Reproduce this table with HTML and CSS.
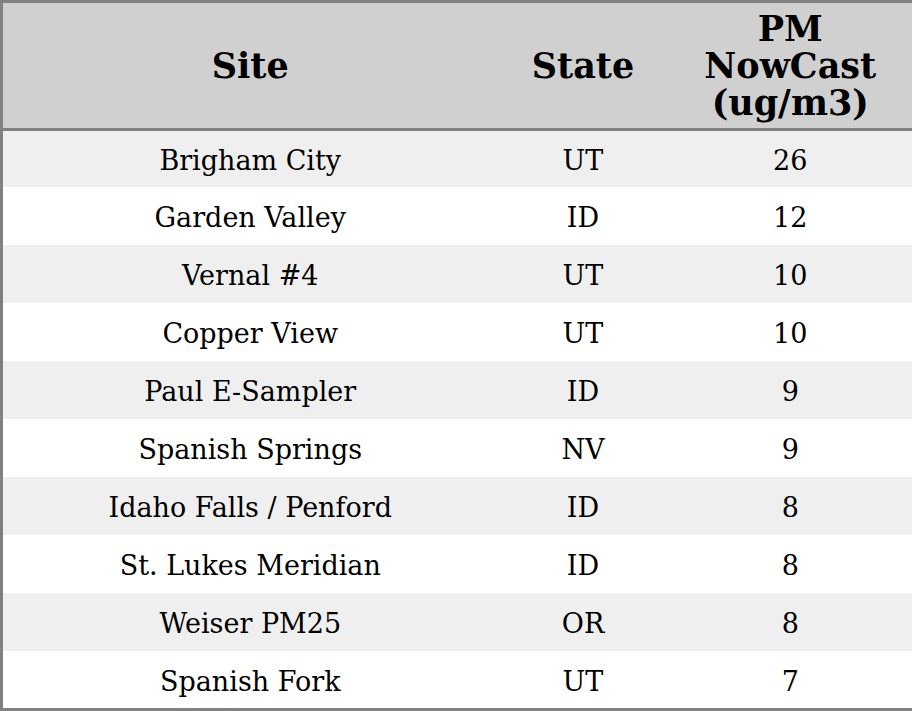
FILE: index.html
```html
<!DOCTYPE html>
<html>
<head>
<meta charset="utf-8">
<link rel="stylesheet" href="styles.css">
</head>
<body>
<table class="aq">
  <colgroup>
    <col class="c-site">
    <col class="c-state">
    <col class="c-pm">
  </colgroup>
  <thead>
    <tr class="head"><th>Site</th><th>State</th><th>PM<br>NowCast<br>(ug/m3)</th></tr>
  </thead>
  <tbody>
    <tr class="r1"><td>Brigham City</td><td>UT</td><td>26</td></tr>
    <tr><td>Garden Valley</td><td>ID</td><td>12</td></tr>
    <tr><td>Vernal #4</td><td>UT</td><td>10</td></tr>
    <tr><td>Copper View</td><td>UT</td><td>10</td></tr>
    <tr><td>Paul E-Sampler</td><td>ID</td><td>9</td></tr>
    <tr><td>Spanish Springs</td><td>NV</td><td>9</td></tr>
    <tr><td>Idaho Falls / Penford</td><td>ID</td><td>8</td></tr>
    <tr><td>St. Lukes Meridian</td><td>ID</td><td>8</td></tr>
    <tr><td>Weiser PM25</td><td>OR</td><td>8</td></tr>
    <tr class="rlast"><td>Spanish Fork</td><td>UT</td><td>7</td></tr>
  </tbody>
</table>
</body>
</html>
```
FILE: styles.css
```css
html, body {
  margin: 0;
  padding: 0;
  background: #ffffff;
}
.aq {
  width: 912px;
  border-collapse: collapse;
  border: 3px solid #808080;
  font-family: "DejaVu Serif", serif;
  color: #000;
  table-layout: fixed;
}
.c-site { width: 496px; }
.c-state { width: 171px; }
.c-pm { width: 245px; }
.aq th, .aq td {
  padding: 0;
  text-align: center;
  vertical-align: middle;
}
.head {
  background: #d0d0d0;
  height: 128px;
  border-bottom: 3px solid #808080;
}
.head th {
  font-size: 35px;
  font-weight: bold;
  line-height: 37px;
}
.aq tbody tr {
  height: 58px;
  font-size: 27px;
}
.aq tbody td {
  padding-top: 4px;
}
.aq tbody tr:nth-child(odd) {
  background: #efefef;
}
.aq tbody tr.r1 { height: 57px; }
.aq tbody tr.rlast { height: 59px; }
```
